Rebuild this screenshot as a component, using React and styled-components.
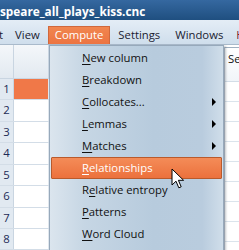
import React from 'react';
import styled, { createGlobalStyle } from 'styled-components';

const GlobalStyle = createGlobalStyle`
  html, body {
    margin: 0;
    padding: 0;
    background: #ffffff;
    overflow: hidden;
  }
  body {
    font-family: 'Open Sans', 'Noto Sans', sans-serif;
  }
`;

const Window = styled.div`
  position: relative;
  width: 239px;
  height: 250px;
  overflow: hidden;
  background: #ffffff;
`;

const TitleBar = styled.div`
  height: 20px;
  box-sizing: border-box;
  padding-top: 3px;
  background: linear-gradient(#3568a0, #1f4f80);
  overflow: hidden;
  white-space: nowrap;
`;

const Title = styled.span`
  display: block;
  line-height: 17px;
  font-size: 11.8px;
  font-weight: 700;
  color: #ffffff;
`;

// the window is wider than the shot, so the bar starts left of the edge
const MenuBar = styled.div`
  height: 25px;
  box-sizing: border-box;
  display: flex;
  align-items: flex-end;
  gap: 1px;
  margin-left: -24px;
  background: linear-gradient(#e4edf6, #cfdeec);
  border-bottom: 1px solid #a9bacb;
  white-space: nowrap;
`;

const MenuBarItem = styled.div`
  height: 18px;
  box-sizing: border-box;
  padding: 0 ${(p) => (p.$trim ? '3px' : '6px')} 0 6px;
  margin-left: ${(p) => (p.$tight ? '-2px' : '0')};
  line-height: 16px;
  font-size: 11.3px;
  color: ${(p) => p.$color || '#1a2130'};
  border: 1px solid ${(p) => (p.$open ? '#d0683c' : 'transparent')};
  border-bottom: none;
  background: ${(p) => (p.$open ? 'linear-gradient(#f1864f, #ec7442)' : 'transparent')};
  ${(p) => p.$open && 'color: #ffffff;'}
`;

const Body = styled.div`
  display: flex;
  height: 205px;
`;

const LeftGrid = styled.div`
  width: 224px;
  flex: none;
`;

const GridHeader = styled.div`
  display: grid;
  grid-template-columns: 14px 35px 1fr;
  height: 34px;
  background: linear-gradient(#f4f7fa, #e2e9f0);
  border-bottom: 1px solid #c9d5e1;
  box-sizing: border-box;
`;

const HeaderCell = styled.div`
  border-right: 1px solid #c9d5e1;
`;

const GridRow = styled.div`
  display: grid;
  grid-template-columns: 14px 35px 1fr;
  height: 21.43px;
  box-sizing: border-box;
  border-bottom: 1px solid #d3dde7;
`;

const RowNum = styled.div`
  background: #e1e9f1;
  border-right: 1px solid #c9d5e1;
  text-align: center;
  font-size: 11.3px;
  line-height: 20.4px;
  color: #1c2a55;
`;

const Cell = styled.div`
  background: ${(p) => (p.$selected ? '#f07848' : '#ffffff')};
  border-right: 1px solid #e0e7ee;
`;

const RightPanel = styled.div`
  flex: 1;
  margin-top: 2px;
  border-left: 1px solid #b9c6d3;
`;

const PanelHeader = styled.div`
  height: 35px;
  box-sizing: border-box;
  border-top: 1px solid #9fb0c1;
  border-bottom: 1px solid #d3dde7;
  padding: 2px 0 0 3px;
  font-size: 11.3px;
  line-height: 18px;
  color: #111;
  white-space: nowrap;
  background: linear-gradient(#ffffff, #f1f5f9);
`;

const PanelRow = styled.div`
  height: 20px;
  box-sizing: border-box;
  border-bottom: 1px solid #dbe4ec;
`;

const Dropdown = styled.div`
  position: absolute;
  left: 49px;
  top: 45px;
  width: 175px;
  height: 220px;
  box-sizing: border-box;
  padding: 1px;
  border: 1px solid #97a9bb;
  background: linear-gradient(
    to right,
    #dbe5ee 0%,
    #c6d6e4 20%,
    #b7cbdd 60%,
    #b9ccde 88%,
    #d0deea 100%
  );
  box-shadow: 2px 1px 2px rgba(80, 90, 100, 0.35);
`;

const MenuItem = styled.div`
  position: relative;
  height: 22px;
  box-sizing: border-box;
  padding-left: 30px;
  line-height: 20px;
  font-size: 11.3px;
  white-space: nowrap;
  border: 1px solid ${(p) => (p.$active ? '#b95a2c' : 'transparent')};
  border-radius: 1px;
  color: ${(p) => (p.$active ? '#ffffff' : '#111111')};
  background: ${(p) => (p.$active ? 'linear-gradient(#f48c58, #ec713d)' : 'transparent')};

  u {
    text-decoration: underline;
    text-underline-offset: 2px;
    text-decoration-thickness: 1px;
  }
`;

const SubArrow = styled.span`
  position: absolute;
  right: 5px;
  top: 6px;
  width: 0;
  height: 0;
  border-left: 4px solid #000;
  border-top: 4px solid transparent;
  border-bottom: 4px solid transparent;
`;

const Cursor = styled.svg`
  position: absolute;
  left: 171px;
  top: 168px;
`;

const rows = [1, 2, 3, 4, 5, 6, 7, 8, 9];

const items = [
  { key: 'N', rest: 'ew column' },
  { key: 'B', rest: 'reakdown' },
  { key: 'C', rest: 'ollocates...', sub: true },
  { key: 'L', rest: 'emmas', sub: true },
  { key: 'M', rest: 'atches', sub: true },
  { key: 'R', rest: 'elationships', active: true },
  { pre: 'R', key: 'e', rest: 'lative entropy' },
  { key: 'P', rest: 'atterns' },
  { key: 'W', rest: 'ord Cloud' },
];

export default function App() {
  return (
    <>
      <GlobalStyle />
      <Window>
        <TitleBar>
          <Title>speare_all_plays_kiss.cnc</Title>
        </TitleBar>
        <MenuBar>
          <MenuBarItem $trim>Edit</MenuBarItem>
          <MenuBarItem>View</MenuBarItem>
          <MenuBarItem $open>Compute</MenuBarItem>
          <MenuBarItem>Settings</MenuBarItem>
          <MenuBarItem>Windows</MenuBarItem>
          <MenuBarItem $color="#7a1f30" $tight>Help</MenuBarItem>
        </MenuBar>
        <Body>
          <LeftGrid>
            <GridHeader>
              <HeaderCell />
              <HeaderCell />
              <div />
            </GridHeader>
            {rows.map((n) => (
              <GridRow key={n}>
                <RowNum>{n}</RowNum>
                <Cell $selected={n === 1} />
                <div />
              </GridRow>
            ))}
          </LeftGrid>
          <RightPanel>
            <PanelHeader>Search</PanelHeader>
            {rows.map((n) => (
              <PanelRow key={n} />
            ))}
          </RightPanel>
        </Body>
        <Dropdown>
          {items.map((it) => (
            <MenuItem key={it.rest} $active={it.active}>
              {it.pre}
              <u>{it.key}</u>
              {it.rest}
              {it.sub && <SubArrow />}
            </MenuItem>
          ))}
        </Dropdown>
        <Cursor width="14" height="22" viewBox="0 0 14 22">
          <path
            d="M1 1 L1 17 L5 13.2 L7.8 19.8 L10.2 18.8 L7.4 12.3 L12.6 12.3 Z"
            fill="#ffffff"
            stroke="#000000"
            strokeWidth="1"
            strokeLinejoin="miter"
          />
        </Cursor>
      </Window>
    </>
  );
}
